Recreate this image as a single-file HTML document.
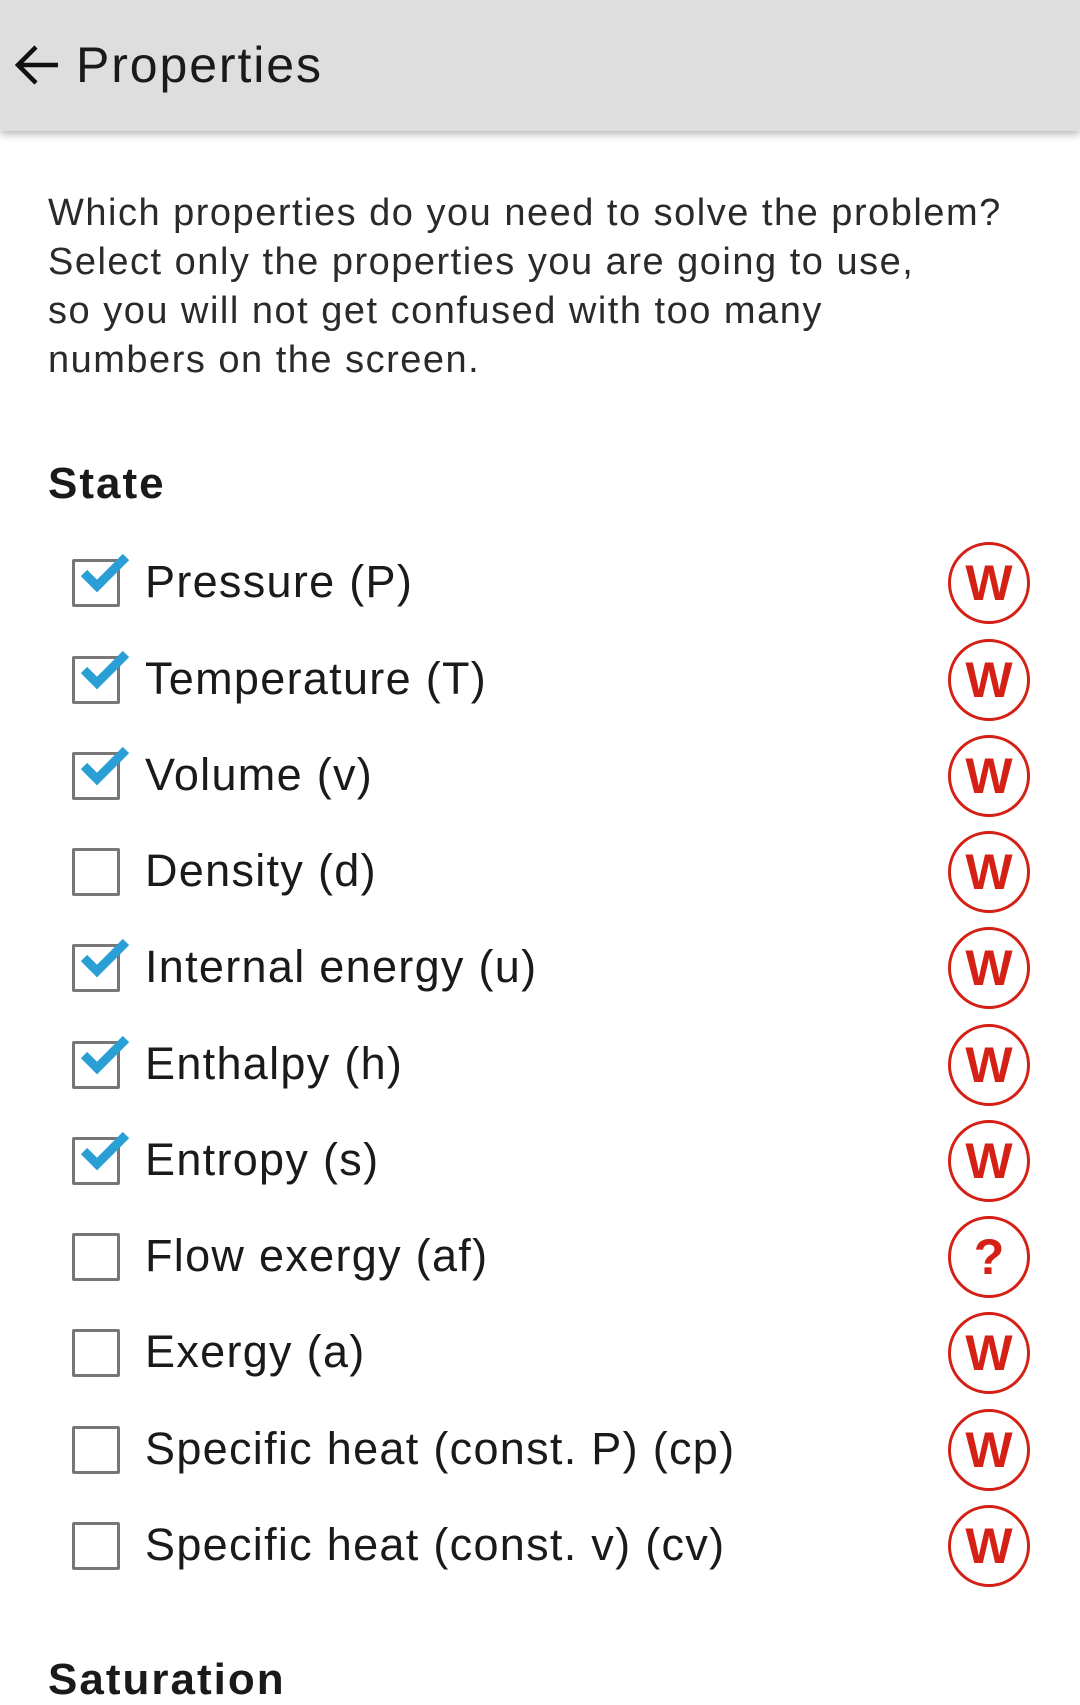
<!DOCTYPE html>
<html><head><meta charset="utf-8"><style>
*{margin:0;padding:0;box-sizing:border-box}
body{width:1080px;height:1689px;overflow:hidden;background:#fff;font-family:"Liberation Sans",sans-serif;position:relative;color:#222}
.hdr{position:absolute;left:0;top:0;width:1080px;height:131px;background:#dedede;box-shadow:0 3px 8px rgba(0,0,0,.3)}
.title{position:absolute;left:76px;top:36px;font-size:50px;letter-spacing:1.9px;color:#1a1a1a}
.p{position:absolute;left:48px;top:189px;font-size:38px;letter-spacing:1.5px;line-height:49px;color:#2a2a2a;white-space:nowrap}
.h{position:absolute;left:48px;font-size:44px;letter-spacing:2px;font-weight:bold;color:#1a1a1a}
.row{position:absolute;left:0;width:1080px;height:96px}
.cb{position:absolute;left:72px;top:24px;width:48px;height:48px;border:3px solid #777;border-radius:2px;background:#fff}
.lbl{position:absolute;left:145px;top:21px;font-size:45px;letter-spacing:1.3px;color:#1a1a1a;white-space:nowrap}
.ck{position:absolute;left:72px;top:14px}
.w{position:absolute;left:948px;top:7px;width:82px;height:82px;border:3px solid #d42015;border-radius:50%;color:#d42015;font-weight:bold;font-size:50px;text-align:center;line-height:76px}
</style></head><body>
<div class="hdr">
<svg style="position:absolute;left:12px;top:40px" width="50" height="50" viewBox="0 0 50 50"><path d="M46 25H6M24 7L6 25l18 18" fill="none" stroke="#111" stroke-width="4.5"/></svg>
<div class="title">Properties</div>
</div>
<div class="p">Which properties do you need to solve the problem?<br>Select only the properties you are going to use,<br>so you will not get confused with too many<br>numbers on the screen.</div>
<div class="h" style="top:459px">State</div>
<div class="row" style="top:535px"><div class="cb"></div><svg class="ck" width="60" height="50"><path d="M12 24l13 13L54 8" fill="none" stroke="#2a9fd6" stroke-width="9"/></svg><div class="lbl">Pressure (P)</div><div class="w">W</div></div>
<div class="row" style="top:632px"><div class="cb"></div><svg class="ck" width="60" height="50"><path d="M12 24l13 13L54 8" fill="none" stroke="#2a9fd6" stroke-width="9"/></svg><div class="lbl">Temperature (T)</div><div class="w">W</div></div>
<div class="row" style="top:728px"><div class="cb"></div><svg class="ck" width="60" height="50"><path d="M12 24l13 13L54 8" fill="none" stroke="#2a9fd6" stroke-width="9"/></svg><div class="lbl">Volume (v)</div><div class="w">W</div></div>
<div class="row" style="top:824px"><div class="cb"></div><div class="lbl">Density (d)</div><div class="w">W</div></div>
<div class="row" style="top:920px"><div class="cb"></div><svg class="ck" width="60" height="50"><path d="M12 24l13 13L54 8" fill="none" stroke="#2a9fd6" stroke-width="9"/></svg><div class="lbl">Internal energy (u)</div><div class="w">W</div></div>
<div class="row" style="top:1017px"><div class="cb"></div><svg class="ck" width="60" height="50"><path d="M12 24l13 13L54 8" fill="none" stroke="#2a9fd6" stroke-width="9"/></svg><div class="lbl">Enthalpy (h)</div><div class="w">W</div></div>
<div class="row" style="top:1113px"><div class="cb"></div><svg class="ck" width="60" height="50"><path d="M12 24l13 13L54 8" fill="none" stroke="#2a9fd6" stroke-width="9"/></svg><div class="lbl">Entropy (s)</div><div class="w">W</div></div>
<div class="row" style="top:1209px"><div class="cb"></div><div class="lbl">Flow exergy (af)</div><div class="w">?</div></div>
<div class="row" style="top:1305px"><div class="cb"></div><div class="lbl">Exergy (a)</div><div class="w">W</div></div>
<div class="row" style="top:1402px"><div class="cb"></div><div class="lbl">Specific heat (const. P) (cp)</div><div class="w">W</div></div>
<div class="row" style="top:1498px"><div class="cb"></div><div class="lbl">Specific heat (const. v) (cv)</div><div class="w">W</div></div>
<div class="h" style="top:1655px">Saturation</div>
</body></html>
